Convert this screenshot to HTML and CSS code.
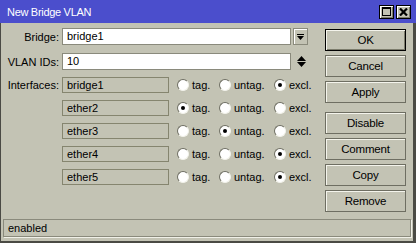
FILE: index.html
```html
<!DOCTYPE html>
<html lang="en">
<head>
    <meta charset="UTF-8">
    <title>New Bridge VLAN</title>
    <link rel="stylesheet" href="styles.css">
</head>
<body>
    <div class="window">
        <div class="titlebar">
            <span class="title">New Bridge VLAN</span>
            <div class="title-buttons">
                <span class="tbtn">
                    <svg width="9" height="9" viewBox="0 0 9 9"><rect x="0.5" y="0.5" width="8" height="8" fill="none" stroke="#000"/><rect x="0" y="0" width="9" height="2" fill="#000"/></svg>
                </span>
                <span class="tbtn">
                    <svg width="9" height="8" viewBox="0 0 9 8"><path d="M1 0.5 L8 7.5 M8 0.5 L1 7.5" stroke="#000" stroke-width="2.2"/></svg>
                </span>
            </div>
        </div>

        <div class="frame">
            <div class="main">
                <div class="form">
                    <div class="row row-field">
                        <span class="label">Bridge:</span>
                        <span class="input">bridge1</span>
                        <span class="drop-btn">
                            <svg width="7" height="6" viewBox="0 0 7 6"><rect x="0" y="0" width="7" height="1" fill="#000"/><path d="M0 2 H7 L3.5 6 Z" fill="#000"/></svg>
                        </span>
                    </div>
                    <div class="row row-field">
                        <span class="label">VLAN IDs:</span>
                        <span class="input">10</span>
                        <span class="spinner">
                            <svg width="9" height="11" viewBox="0 0 9 11"><path d="M4.5 0 L9 5 H0 Z" fill="#000"/><path d="M0 6 H9 L4.5 11 Z" fill="#000"/></svg>
                        </span>
                    </div>

                    <div class="iface-list" id="ifaces"></div>
                </div>

                <div class="buttons">
                    <div class="btn btn-default">OK</div>
                    <div class="btn">Cancel</div>
                    <div class="btn">Apply</div>
                    <div class="btn btn-sep">Disable</div>
                    <div class="btn">Comment</div>
                    <div class="btn">Copy</div>
                    <div class="btn">Remove</div>
                </div>
            </div>

            <div class="status">enabled</div>
        </div>
    </div>

    <script>
        // interface rows: name + selected mode
        const ifaces = [
            ['bridge1', 'excl.'],
            ['ether2', 'tag.'],
            ['ether3', 'untag.'],
            ['ether4', 'excl.'],
            ['ether5', 'excl.']
        ];
        const modes = ['tag.', 'untag.', 'excl.'];

        document.getElementById('ifaces').innerHTML = ifaces.map((item, i) => `
            <div class="row row-iface">
                <span class="label">${i === 0 ? 'Interfaces:' : ''}</span>
                <span class="iface-box">${item[0]}</span>
                <div class="radios">
                    ${modes.map(m => `
                        <span class="opt opt-${m.replace('.', '')}">
                            <span class="radio ${m === item[1] ? 'checked' : ''}"></span>${m}
                        </span>
                    `).join('')}
                </div>
            </div>
        `).join('');
    </script>
</body>
</html>
```

FILE: styles.css
```css
* {
    box-sizing: border-box;
}
body {
    margin: 0;
    font-family: "Liberation Sans", Arial, sans-serif;
    font-size: 11px;
    color: #000;
    background: #c3c3b4;
}
.window {
    width: 416px;
    height: 243px;
    display: flex;
    flex-direction: column;
}
.titlebar {
    height: 23px;
    background: #4b4ecc;
    display: flex;
    align-items: center;
    justify-content: space-between;
    padding: 0 5px 0 7px;
}
.title {
    color: #fff;
    font-size: 11px;
    letter-spacing: -0.3px;
}
.title-buttons {
    display: flex;
    gap: 2px;
}
.tbtn {
    width: 15px;
    height: 14px;
    background: #c3c3b4;
    border: 1px solid #000;
    box-shadow: inset 1px 1px 0 #fff, inset -1px -1px 0 #7c7c6c;
    display: flex;
    align-items: center;
    justify-content: center;
}
.frame {
    flex: 1;
    border-left: 1px solid #4a4a44;
    border-right: 3px solid #4a4a44;
    border-bottom: 2px solid #4a4a44;
    padding: 5px 0 4px 2px;
    display: flex;
    flex-direction: column;
}
.main {
    flex: 1;
    display: flex;
}
.form {
    width: 321px;
}
.row {
    display: flex;
    align-items: center;
}
.label {
    width: 56px;
    text-align: right;
    margin-right: 3px;
    flex-shrink: 0;
}
.row-field {
    height: 17px;
    margin-bottom: 8px;
}
.input {
    width: 229px;
    height: 17px;
    background: #fff;
    border: 1px solid #8a8a7c;
    padding-left: 4px;
    line-height: 15px;
}
.drop-btn {
    width: 15px;
    height: 17px;
    margin-left: 2px;
    border: 1px solid #8a8a7c;
    box-shadow: inset 1px 1px 0 #fff;
    display: flex;
    align-items: center;
    justify-content: center;
    padding-top: 1px;
}
.spinner {
    width: 15px;
    margin-left: 3px;
    display: flex;
    justify-content: center;
}
.iface-list {
    margin-top: -1px;
}
.row-iface {
    height: 16px;
    margin-bottom: 7px;
}
.iface-box {
    width: 107px;
    height: 16px;
    border: 1px solid #85856f;
    padding-left: 4px;
    line-height: 14px;
}
.radios {
    display: flex;
    margin-left: 8px;
}
.opt {
    display: flex;
    align-items: center;
}
.opt-tag {
    width: 42px;
}
.opt-untag {
    width: 55px;
}
.radio {
    width: 12px;
    height: 12px;
    border-radius: 50%;
    background: #fff;
    border: 1px solid;
    border-color: #6e6e62 #f2f2ea #f2f2ea #6e6e62;
    margin-right: 3px;
    display: flex;
    align-items: center;
    justify-content: center;
}
.radio.checked::after {
    content: "";
    width: 4px;
    height: 4px;
    border-radius: 50%;
    background: #000;
}
.buttons {
    width: 81px;
    margin-left: 1px;
    margin-top: 1px;
    display: flex;
    flex-direction: column;
    gap: 4px;
}
.btn {
    height: 22px;
    border: 1px solid #6e6e62;
    box-shadow: inset 1px 1px 0 #f4f4ec;
    display: flex;
    align-items: center;
    justify-content: center;
    font-size: 11.5px;
    letter-spacing: -0.2px;
}
.btn-default {
    border-color: #000;
    box-shadow: inset 1px 1px 0 #f4f4ec, inset -1px -1px 0 #7c7c6c;
}
.btn-sep {
    margin-top: 5px;
}
.status {
    height: 18px;
    margin-right: 2px;
    border: 1px solid #8a8a7c;
    box-shadow: 1px 1px 0 #f0f0e8;
    padding-left: 4px;
    line-height: 16px;
}
```
